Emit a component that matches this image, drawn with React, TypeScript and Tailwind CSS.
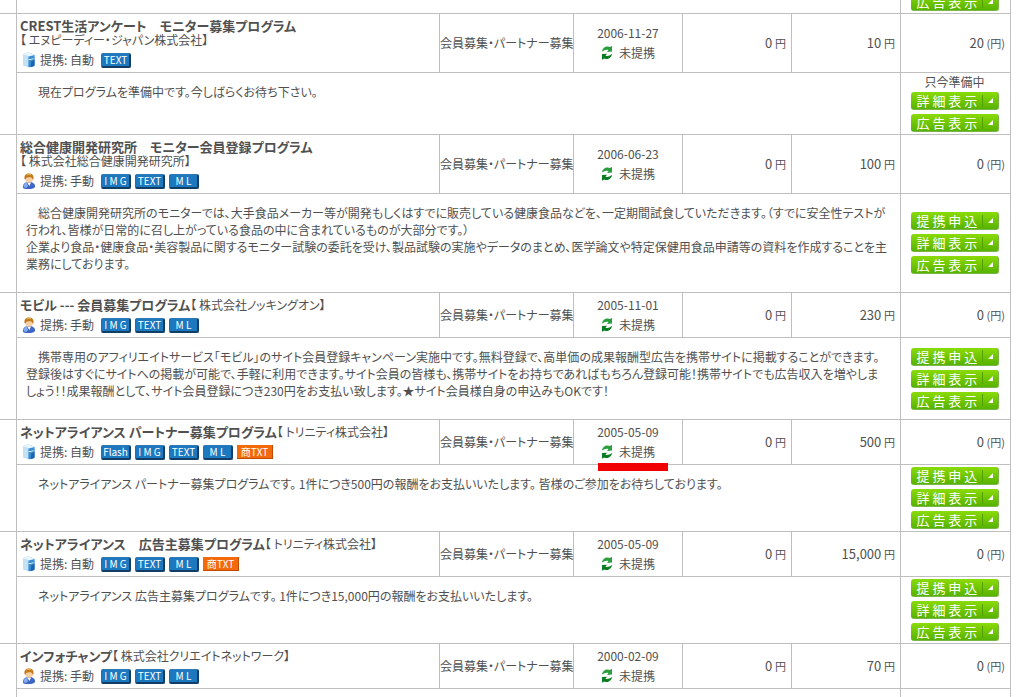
import type { ReactNode } from 'react';

type Approval = 'auto' | 'manual';
type Action = '提 携 申 込' | '詳 細 表 示' | '広 告 表 示';

interface Program {
  title: string;
  company: string;
  companyOnNewLine?: boolean;
  approval: Approval;
  media: string[];
  date: string;
  clickReward: string;
  actionReward: string;
  average: string;
  highlighted?: boolean;
  preparing?: boolean;
  description: string[];
}

const ALL_ACTIONS: Action[] = ['提 携 申 込', '詳 細 表 示', '広 告 表 示'];

const PROGRAMS: Program[] = [
  {
    title: 'CREST生活アンケート　モニター募集プログラム',
    company: 'エヌピーディー・ジャパン株式会社',
    companyOnNewLine: true,
    approval: 'auto',
    media: ['TEXT'],
    date: '2006-11-27',
    clickReward: '0',
    actionReward: '10',
    average: '20',
    preparing: true,
    description: ['　現在プログラムを準備中です。今しばらくお待ち下さい。'],
  },
  {
    title: '総合健康開発研究所　モニター会員登録プログラム',
    company: '株式会社総合健康開発研究所',
    companyOnNewLine: true,
    approval: 'manual',
    media: ['I M G', 'TEXT', 'M L'],
    date: '2006-06-23',
    clickReward: '0',
    actionReward: '100',
    average: '0',
    description: [
      '　総合健康開発研究所のモニターでは、大手食品メーカー等が開発もしくはすでに販売している健康食品などを、一定期間試食していただきます。（すでに安全性テストが',
      '行われ、皆様が日常的に召し上がっている食品の中に含まれているものが大部分です。）',
      '企業より食品・健康食品・美容製品に関するモニター試験の委託を受け、製品試験の実施やデータのまとめ、医学論文や特定保健用食品申請等の資料を作成することを主',
      '業務にしております。',
    ],
  },
  {
    title: 'モビル --- 会員募集プログラム',
    company: '株式会社ノッキングオン',
    approval: 'manual',
    media: ['I M G', 'TEXT', 'M L'],
    date: '2005-11-01',
    clickReward: '0',
    actionReward: '230',
    average: '0',
    description: [
      '　携帯専用のアフィリエイトサービス「モビル」のサイト会員登録キャンペーン実施中です。無料登録で、高単価の成果報酬型広告を携帯サイトに掲載することができます。',
      '登録後はすぐにサイトへの掲載が可能で、手軽に利用できます。サイト会員の皆様も、携帯サイトをお持ちであればもちろん登録可能！携帯サイトでも広告収入を増やしま',
      'しょう！！成果報酬として、サイト会員登録につき230円をお支払い致します。★サイト会員様自身の申込みもOKです！',
    ],
  },
  {
    title: 'ネットアライアンス パートナー募集プログラム',
    company: 'トリニティ株式会社',
    approval: 'auto',
    media: ['Flash', 'I M G', 'TEXT', 'M L', '商TXT'],
    date: '2005-05-09',
    clickReward: '0',
    actionReward: '500',
    average: '0',
    highlighted: true,
    description: [
      '　ネットアライアンス パートナー募集プログラムです。 1件につき500円の報酬をお支払いいたします。 皆様のご参加をお待ちしております。',
    ],
  },
  {
    title: 'ネットアライアンス　広告主募集プログラム',
    company: 'トリニティ株式会社',
    approval: 'auto',
    media: ['I M G', 'TEXT', 'M L', '商TXT'],
    date: '2005-05-09',
    clickReward: '0',
    actionReward: '15,000',
    average: '0',
    description: ['　ネットアライアンス 広告主募集プログラムです。 1件につき15,000円の報酬をお支払いいたします。'],
  },
  {
    title: 'インフォチャンプ',
    company: '株式会社クリエイトネットワーク',
    approval: 'manual',
    media: ['I M G', 'TEXT', 'M L'],
    date: '2000-02-09',
    clickReward: '0',
    actionReward: '70',
    average: '0',
    description: [],
  },
];

function ServerIcon() {
  return (
    <svg width="14" height="16" viewBox="0 0 14 16" className="shrink-0">
      <path d="M1 2.500C2.500 1 6 .5 8.500 1L12.500 3v10.500c-1.500 1.500-4 2-6 1.500L1 13z" fill="#6db4e6" />
      <path d="M1 2.500L6.500 4.500V15L1 13z" fill="#c3e2f7" />
      <path d="M6.500 4.500l6-1.500v10.500c-1.500 1.300-4 1.800-6 1.500z" fill="#3f8ed2" />
      <path d="M9.500 9l3-1v5.500c-1 .9-2.500 1.400-4 1.500z" fill="#1f63ad" />
      <path d="M1 2.500C2.500 1 6 .5 8.500 1l4 2-6 1.500z" fill="#e6f5fe" />
      <path d="M6.500 7.500c2 .2 4-.2 5-1" stroke="#d9f0ff" fill="none" />
    </svg>
  );
}

function PersonIcon() {
  return (
    <svg width="14" height="16" viewBox="0 0 14 16" className="shrink-0">
      <path d="M1 15c-.5-4 2-6 6-6s6.500 2 6 5c-1 1.500-3 2-6 2s-5 0-6-1z" fill="#3e66c4" />
      <path d="M1.500 14c0-3 1.500-4 3.500-4.500L6 13l-2 2z" fill="#86aaf0" />
      <path d="M5 9.500h4L7.500 13z" fill="#fff" />
      <circle cx="7" cy="5.500" r="4" fill="#f7cfa0" />
      <path d="M2.500 6C2 2 4 .5 7 .5S12 2 11.500 6c-.5 1-.8 1-1 0C10 4 8 4 6 4.500 4.500 4.500 4 5 3.500 6.500z" fill="#c47a1c" />
      <path d="M4.500 2C6 1 8 1 9 2" stroke="#f0b860" fill="none" />
    </svg>
  );
}

function SyncIcon() {
  return (
    <svg width="12" height="14" viewBox="0 0 12 14" className="shrink-0">
      <path d="M1 5.500C1.500 2 4 .5 6.500.5c1 0 1.800.2 2.300.6L11 0v5.500L6 6l1.500-2C5 3.200 3.500 4 1 5.500z" fill="#2a9d3f" />
      <path d="M11 8c-.5 3.500-3 5-5.500 5-1 0-1.800-.2-2.300-.6L1 13.800V8l5-.3L4.500 9.700C7 10.500 8.500 9.500 11 8z" fill="#0a7d22" />
    </svg>
  );
}

function MediaBadge({ label }: { label: string }) {
  if (label.startsWith('商')) {
    return (
      <span className="flex h-[14px] w-9 items-center justify-center whitespace-nowrap border-r border-b border-[#c24a00] bg-[#f26a0c] text-[10px] leading-none text-white">
        {label}
      </span>
    );
  }
  return (
    <span className="flex h-[15px] w-[30px] items-center justify-center whitespace-nowrap rounded-[2px] border border-r-2 border-b-2 border-[#123e66] border-t-[#2f78b0] border-l-[#2d6ca0] bg-[#1c78bf] text-[10px] leading-none text-white">
      {label}
    </span>
  );
}

function ActionButton({ label }: { label: Action }) {
  return (
    <button
      type="button"
      className="flex h-[18px] w-[88px] shrink-0 items-center rounded-[3px] border-r border-b border-[#79b548] bg-linear-to-b from-[#8bdb0a] to-[#57b300] pl-[6px] text-[13px] leading-none text-white"
    >
      <span className="flex-1 whitespace-nowrap text-left">{label}</span>
      <span className="flex h-3 w-4 items-center justify-center border-l border-[#4fa000]">
        <svg width="5" height="5" viewBox="0 0 5 5">
          <path d="M5 0v5H0z" fill="#fff" />
        </svg>
      </span>
    </button>
  );
}

function Cell({ className = '', children }: { className?: string; children?: ReactNode }) {
  return <td className={`border-r border-b border-[#bfbfbf] ${className}`}>{children}</td>;
}

function Amount({ value, unit }: { value: string; unit: string }) {
  return (
    <>
      <span className="text-[13px]">{value}</span> <span className="text-[11px]">{unit}</span>
    </>
  );
}

function ProgramRows({ program }: { program: Program }) {
  const actions = program.preparing ? ALL_ACTIONS.slice(1) : ALL_ACTIONS;
  const company = `【 ${program.company}】`;

  return (
    <>
      <tr>
        <td rowSpan={2} className="border-r border-b border-[#bfbfbf]" />
        <Cell className="pt-[5px] pr-1 pb-[2px] pl-[3px] align-top whitespace-nowrap">
          <div className="leading-[14px]">
            <strong className="text-[13px] font-bold">{program.title}</strong>
            {!program.companyOnNewLine && company}
          </div>
          {program.companyOnNewLine && <div className="leading-[14px]">{company}</div>}
          <div className="mt-[3px] flex h-5 items-center pl-[2px]">
            {program.approval === 'auto' ? <ServerIcon /> : <PersonIcon />}
            <span className="w-[65px] pl-1">提携: {program.approval === 'auto' ? '自動' : '手動'}</span>
            <span className="flex items-center gap-1">
              {program.media.map((m) => (
                <MediaBadge key={m} label={m} />
              ))}
            </span>
          </div>
        </Cell>
        <Cell className="text-center whitespace-nowrap">会員募集・パートナー募集</Cell>
        <Cell className="relative text-center leading-5">
          <div>{program.date}</div>
          <div className="flex items-center justify-center gap-[6px]">
            <SyncIcon />
            未提携
          </div>
          {program.highlighted && <span className="absolute -bottom-[7px] left-6 h-2 w-[70px] bg-[#f00000]" />}
        </Cell>
        <Cell className="pr-[5px] text-right">
          <Amount value={program.clickReward} unit="円" />
        </Cell>
        <Cell className="pr-[5px] text-right">
          <Amount value={program.actionReward} unit="円" />
        </Cell>
        <Cell className="pr-[5px] text-right">
          <Amount value={program.average} unit="(円)" />
        </Cell>
      </tr>
      {program.description.length > 0 ? (
        <tr>
          <td colSpan={5} className="border-r border-b border-[#bfbfbf] px-[9px] pt-[10px] pb-5 align-top leading-[17px]">
            {program.description.map((line) => (
              <p key={line} className="whitespace-nowrap">
                {line}
              </p>
            ))}
          </td>
          <Cell className="py-[2px] pr-[2px] align-middle">
            <div className="flex flex-col items-center gap-1">
              {program.preparing && <span className="leading-[13px]">只今準備中</span>}
              {actions.map((a) => (
                <ActionButton key={a} label={a} />
              ))}
            </div>
          </Cell>
        </tr>
      ) : (
        <tr className="h-12">
          <td colSpan={5} className="border-r border-b border-[#bfbfbf]" />
          <Cell />
        </tr>
      )}
    </>
  );
}

export default function App() {
  return (
    <div
      lang="ja"
      className="h-screen overflow-hidden bg-white pr-[11px] font-['Noto_Sans_CJK_JP',sans-serif] text-[12px] text-[#505050] [font-feature-settings:'palt']"
    >
      <table className="w-full table-fixed border-separate border-spacing-0">
        <colgroup>
          <col className="w-[17px]" />
          <col />
          <col className="w-[134px]" />
          <col className="w-[109px]" />
          <col className="w-[109px]" />
          <col className="w-[109px]" />
          <col className="w-[110px]" />
        </colgroup>
        <tbody>
          {/* tail of the previous program */}
          <tr>
            <td className="border-r border-b border-[#bfbfbf]" />
            <td colSpan={5} className="border-r border-b border-[#bfbfbf]" />
            <Cell className="pr-[2px]">
              <div className="flex h-[13px] items-end justify-center overflow-hidden pb-[2px]">
                <ActionButton label="広 告 表 示" />
              </div>
            </Cell>
          </tr>
          {PROGRAMS.map((p) => (
            <ProgramRows key={p.title} program={p} />
          ))}
        </tbody>
      </table>
    </div>
  );
}
